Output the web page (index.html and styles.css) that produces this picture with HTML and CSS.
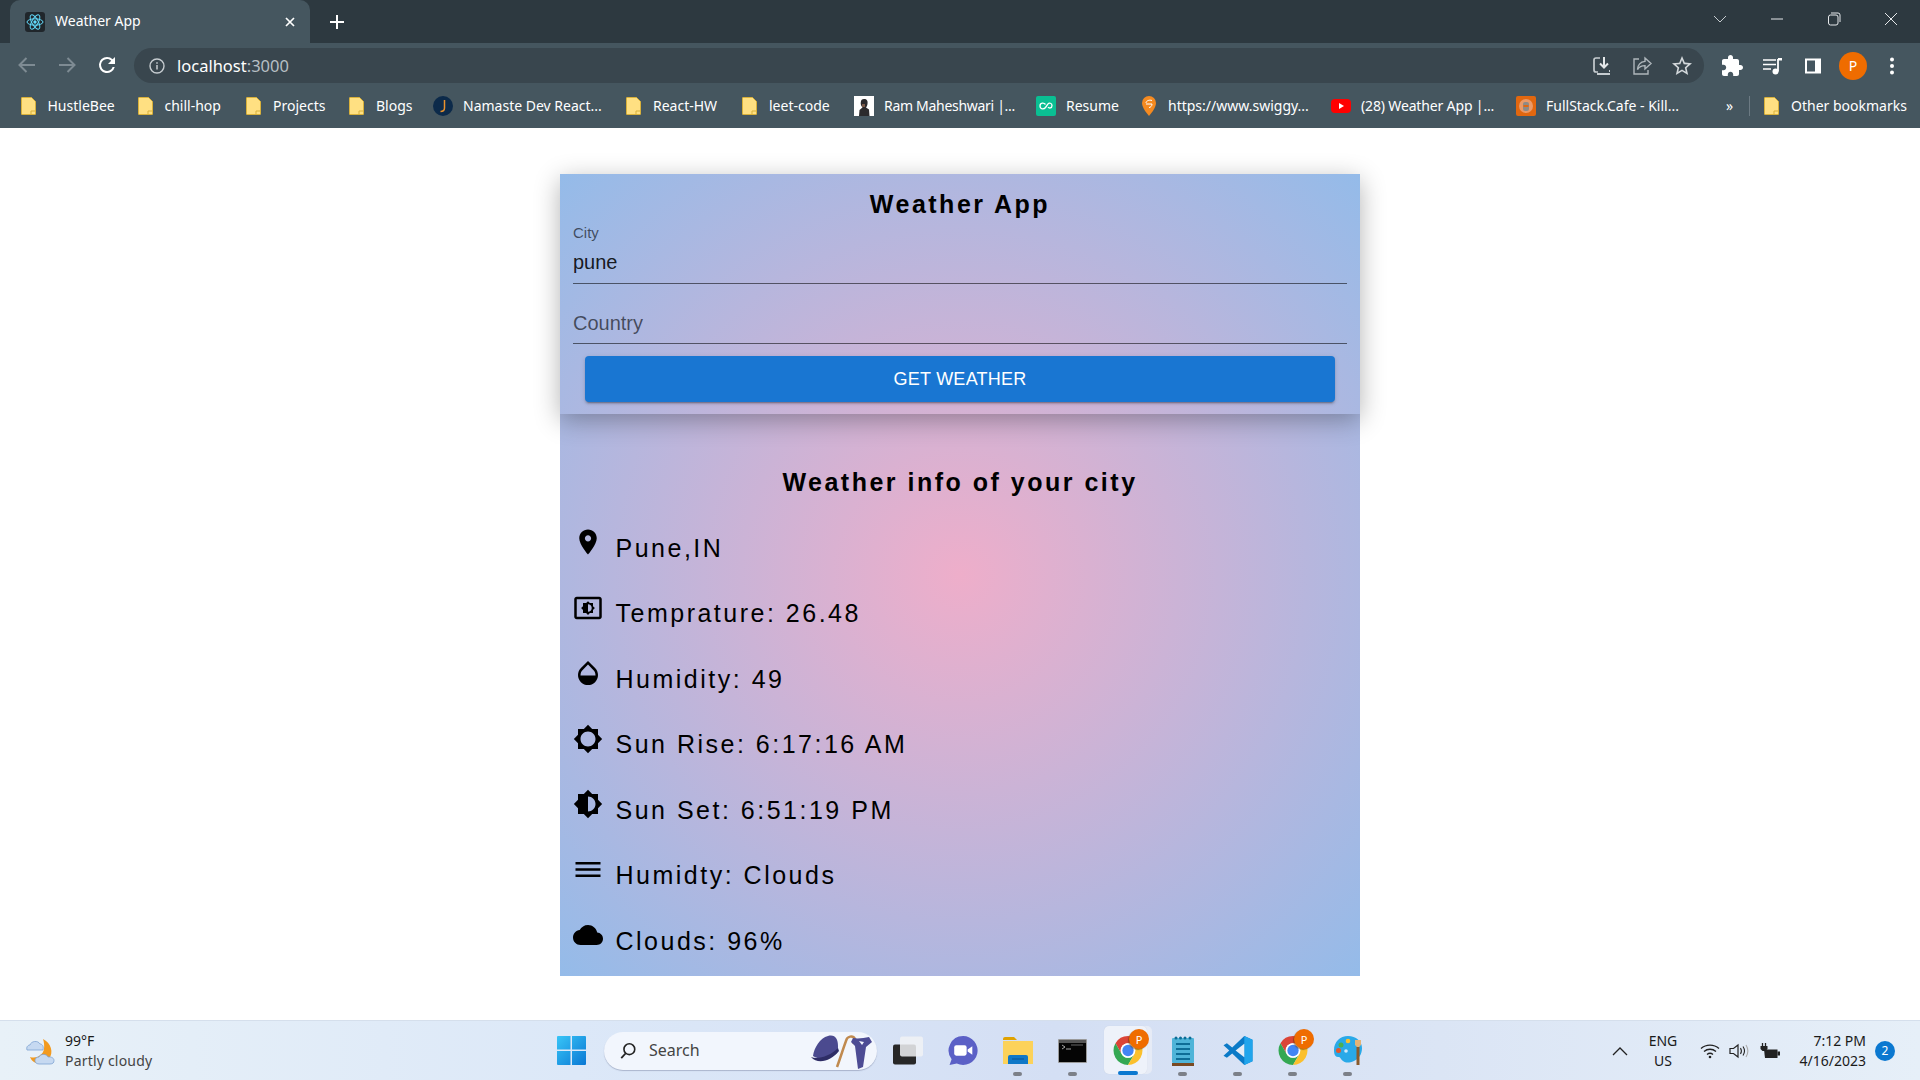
FILE: index.html
```html
<!DOCTYPE html>
<html lang="en">
<head>
<meta charset="utf-8">
<title>Weather App</title>
<link rel="stylesheet" href="styles.css">
</head>
<body>
<svg class="defs" width="0" height="0" aria-hidden="true">
  <symbol id="folder" viewBox="0 0 15 18"><path d="M1 .5h9.5l4 4v12.5a.5.5 0 0 1-.5.5H1a.5.5 0 0 1-.5-.5V1A.5.5 0 0 1 1 .5z" fill="#ffe082" stroke="#d9b13b"/><path d="M10 18v-4h5" fill="none" stroke="#d9b13b"/></symbol>
  <symbol id="chrome" viewBox="0 0 24 24"><path d="M12 0a12 12 0 0 1 10.39 6H12a6 6 0 0 0-5.2 9L1.61 6A12 12 0 0 1 12 0z" fill="#db4437"/><path d="M1.61 6A12 12 0 0 0 12 24l5.2-9a6 6 0 0 1-10.4 0z" fill="#34a853"/><path d="M22.39 6H12a6 6 0 0 1 5.2 9L12 24A12 12 0 0 0 22.39 6z" fill="#fbc02d"/><circle cx="12" cy="12" r="6" fill="#fff"/><circle cx="12" cy="12" r="4.7" fill="#4285f4"/></symbol>
</svg>

<header class="browser">
  <div class="tabstrip">
    <div class="tab">
      <svg class="favicon" viewBox="0 0 20 20"><rect width="20" height="20" rx="3" fill="#20262b"/><g fill="none" stroke="#61dafb" stroke-width="1"><ellipse cx="10" cy="10" rx="8" ry="3.2"/><ellipse cx="10" cy="10" rx="8" ry="3.2" transform="rotate(60 10 10)"/><ellipse cx="10" cy="10" rx="8" ry="3.2" transform="rotate(120 10 10)"/></g><circle cx="10" cy="10" r="1.7" fill="#61dafb"/></svg>
      <span class="tab-title">Weather App</span>
      <svg class="tab-close" viewBox="0 0 10 10"><path d="M1 1l8 8M9 1l-8 8" stroke="#fff" stroke-width="1.7"/></svg>
    </div>
    <svg class="new-tab" viewBox="0 0 16 16"><path d="M8 1v14M1 8h14" stroke="#fff" stroke-width="2"/></svg>
    <div class="winctl">
      <svg class="wc wc-chev" viewBox="0 0 14 14"><path d="M1 4l6 6 6-6" fill="none" stroke="#c5cbcf" stroke-width="1"/></svg>
      <svg class="wc wc-min" viewBox="0 0 14 14"><path d="M1 7h12" stroke="#e6e9eb" stroke-width="1"/></svg>
      <svg class="wc wc-max" viewBox="0 0 14 14"><rect x="1.5" y="3" width="9.5" height="10" rx="2" fill="none" stroke="#e6e9eb"/><path d="M4 1h7a2 2 0 0 1 2 2v7" fill="none" stroke="#e6e9eb"/></svg>
      <svg class="wc wc-close" viewBox="0 0 14 14"><path d="M1 1l12 12M13 1L1 13" stroke="#e6e9eb" stroke-width="1"/></svg>
    </div>
  </div>
  <div class="toolbar">
    <svg class="tb" viewBox="0 0 24 24"><path d="M20 12H5M11.5 5L4.5 12l7 7" fill="none" stroke="#7e8b93" stroke-width="2"/></svg>
    <svg class="tb" viewBox="0 0 24 24"><path d="M4 12h15M12.5 5l7 7-7 7" fill="none" stroke="#7e8b93" stroke-width="2"/></svg>
    <svg class="tb" viewBox="0 0 24 24"><path d="M17.65 6.35A7.96 7.96 0 0 0 12 4a8 8 0 1 0 7.73 10h-2.08A6 6 0 1 1 12 6c1.66 0 3.14.69 4.22 1.78L13 11h7V4l-2.35 2.35z" fill="#fff"/></svg>
    <div class="omnibox">
      <svg class="info" viewBox="0 0 16 16"><circle cx="8" cy="8" r="7" fill="none" stroke="#c6ccd0" stroke-width="1.4"/><path d="M8 7v4.5M8 4.2v1.5" stroke="#c6ccd0" stroke-width="1.5"/></svg>
      <span class="url">localhost<span class="url-port">:3000</span></span>
      <span class="omni-right">
        <svg class="tb" viewBox="0 0 24 24"><path d="M10 4H6a2 2 0 0 0-2 2v10a2 2 0 0 0 2 2h2" fill="none" stroke="#c6ccd0" stroke-width="1.7"/><path d="M14 3v10M10 9.5l4 4 4-4" fill="none" stroke="#e4e7e9" stroke-width="2"/><path d="M7 19h13v2H7z" fill="#c6ccd0"/><path d="M19 16h1v2h-1z" fill="#c6ccd0"/></svg>
        <svg class="tb" viewBox="0 0 24 24"><path d="M9 5H4v15h14v-4" fill="none" stroke="#aeb6bb" stroke-width="1.4"/><path d="M15 4l6 5.5-6 5.5v-3.4c-3.5 0-6 1.2-7.5 4 .3-4.5 3-7.700 7.500-8.200z" fill="none" stroke="#aeb6bb" stroke-width="1.4"/></svg>
        <svg class="tb" viewBox="0 0 24 24"><path d="M22 9.24l-7.19-.62L12 2 9.19 8.63 2 9.24l5.46 4.73L5.82 21 12 17.27 18.18 21l-1.63-7.03L22 9.24zM12 15.4l-3.76 2.27 1-4.28-3.32-2.88 4.38-.38L12 6.1l1.71 4.04 4.38.38-3.32 2.88 1 4.28L12 15.4z" fill="#d3d8db"/></svg>
      </span>
    </div>
    <span class="tb-right">
      <svg class="tb" viewBox="0 0 24 24"><path d="M20.5 11H19V7c0-1.1-.9-2-2-2h-4V3.500C13 2.120 11.880 1 10.500 1S8 2.120 8 3.500V5H4c-1.100 0-1.990.9-1.990 2v3.800H3.500c1.490 0 2.700 1.210 2.700 2.700s-1.210 2.700-2.700 2.700H2V20c0 1.100.9 2 2 2h3.800v-1.500c0-1.490 1.210-2.700 2.700-2.700 1.490 0 2.700 1.210 2.700 2.700V22H17c1.100 0 2-.9 2-2v-4h1.500c1.380 0 2.500-1.120 2.500-2.500S21.880 11 20.500 11z" fill="#fff"/></svg>
      <svg class="tb" viewBox="0 0 24 24"><path d="M3 6h13M3 10.500h13M3 15h8" stroke="#fff" stroke-width="1.700"/><path d="M18 5v12.500" stroke="#fff" stroke-width="1.800"/><path d="M18 4h4v2.500h-4z" fill="#fff"/><circle cx="15.500" cy="17.500" r="3" fill="#fff"/></svg>
      <svg class="tb tb-panel" viewBox="0 0 24 24"><rect x="4" y="4.500" width="16" height="15" fill="#fff"/><rect x="6" y="6.500" width="8" height="11" fill="#44555f"/></svg>
      <span class="avatar">P</span>
      <svg class="tb tb-dots" viewBox="0 0 24 24"><circle cx="12" cy="5.500" r="2" fill="#fff"/><circle cx="12" cy="12" r="2" fill="#fff"/><circle cx="12" cy="18.500" r="2" fill="#fff"/></svg>
    </span>
  </div>
  <nav class="bookmarks">
    <a class="bm"><svg class="ic-folder"><use href="#folder"/></svg><span class="bm-t w-hustle">HustleBee</span></a>
    <a class="bm"><svg class="ic-folder"><use href="#folder"/></svg><span class="bm-t w-chill">chill-hop</span></a>
    <a class="bm"><svg class="ic-folder"><use href="#folder"/></svg><span class="bm-t w-projects">Projects</span></a>
    <a class="bm"><svg class="ic-folder"><use href="#folder"/></svg><span class="bm-t w-blogs">Blogs</span></a>
    <a class="bm"><svg class="ic-fav" viewBox="0 0 20 20"><circle cx="10" cy="10" r="10" fill="#0c2a4a"/><path d="M11.500 4v8c0 2.500-1.500 3.500-4 3.500" fill="none" stroke="#e8912d" stroke-width="1.500"/></svg><span class="bm-t w-namaste">Namaste Dev React...</span></a>
    <a class="bm"><svg class="ic-folder"><use href="#folder"/></svg><span class="bm-t w-react">React-HW</span></a>
    <a class="bm"><svg class="ic-folder"><use href="#folder"/></svg><span class="bm-t w-leet">leet-code</span></a>
    <a class="bm"><svg class="ic-fav" viewBox="0 0 20 20"><rect width="20" height="20" fill="#fff"/><path d="M10 3c3 0 4 2 3.500 5-.3 2-1 3-1.500 3.500l3 2 .5 6.500H5l.5-6 3-2.500C7 10 6.500 8 6.800 6 7 4 8 3 10 3z" fill="#2b2a2c"/><path d="M8 8h3v3H8z" fill="#7b5a49"/></svg><span class="bm-t w-ram">Ram Maheshwari |...</span></a>
    <a class="bm"><svg class="ic-fav" viewBox="0 0 20 20"><rect width="20" height="20" rx="2" fill="#0abf93"/><path d="M9.500 8.500C8 6.500 4 6.500 4 10s4 3.500 5.500 1.500L12 8c1-1.500 4-1 4 1.500 0 3-3 3-4 1.500" fill="none" stroke="#fff" stroke-width="1.300"/></svg><span class="bm-t w-resume">Resume</span></a>
    <a class="bm"><svg class="ic-sw" viewBox="0 0 14 20"><path d="M7 0a7 7 0 0 1 7 7c0 4-4 9.500-7 13-3-3.500-7-9-7-13a7 7 0 0 1 7-7z" fill="#f58a20"/><path d="M4 7c0-2 3-3.500 6-2.500M4 8h6c0 2-1.500 3.500-3 3.500" fill="none" stroke="#fff" stroke-width="1"/></svg><span class="bm-t w-swiggy">https://www.swiggy...</span></a>
    <a class="bm"><svg class="ic-fav" viewBox="0 0 20 20"><rect y="3" width="20" height="14" rx="4" fill="#f00"/><path d="M8 7l5 3-5 3z" fill="#fff"/></svg><span class="bm-t w-yt">(28) Weather App |...</span></a>
    <a class="bm"><svg class="ic-fav" viewBox="0 0 20 20"><rect width="20" height="20" rx="2" fill="#e2670f"/><circle cx="10" cy="10" r="7" fill="#ea9a68"/><rect x="7" y="6" width="6" height="9" rx="2" fill="#8e8a86"/><rect x="7.500" y="9" width="5" height="2" fill="#e2670f"/></svg><span class="bm-t w-full">FullStack.Cafe - Kill...</span></a>
    <span class="bm-more">»</span>
    <span class="bm-sep"></span>
    <a class="bm"><svg class="ic-folder"><use href="#folder"/></svg><span class="bm-t">Other bookmarks</span></a>
  </nav>
</header>

<main class="page">
  <section class="card">
    <form class="form">
      <h1 class="title">Weather App</h1>
      <div class="field field-city">
        <label class="label-small">City</label>
        <div class="value">pune</div>
      </div>
      <div class="field field-country">
        <div class="value placeholder">Country</div>
      </div>
      <button class="btn" type="button">GET WEATHER</button>
    </form>
    <div class="info-panel">
      <h2 class="title info-title">Weather info of your city</h2>
      <div class="row"><svg class="icon" viewBox="0 0 24 24"><path d="M12 2C8.130 2 5 5.130 5 9c0 5.250 7 13 7 13s7-7.750 7-13c0-3.870-3.130-7-7-7zm0 9.500c-1.380 0-2.500-1.120-2.500-2.500s1.120-2.500 2.500-2.500 2.500 1.120 2.500 2.500-1.120 2.500-2.500 2.500z"/></svg><span class="row-t">Pune,IN</span></div>
      <div class="row"><svg class="icon" viewBox="0 0 24 24"><path d="M21 3H3c-1.110 0-2 .89-2 2v14c0 1.110.89 2 2 2h18c1.110 0 2-.89 2-2V5c0-1.110-.89-2-2-2zm0 16.010H3V4.990h18v14.020zM8 16h2.500l1.500 1.500 1.500-1.500H16v-2.500l1.500-1.500-1.500-1.500V8h-2.500L12 6.500 10.500 8H8v2.500L6.500 12 8 13.500V16zm4-7c1.660 0 3 1.340 3 3s-1.340 3-3 3V9z"/></svg><span class="row-t">Temprature: 26.48</span></div>
      <div class="row"><svg class="icon" viewBox="0 0 24 24"><path d="M17.660 8L12 2.350 6.340 8C4.780 9.560 4 11.640 4 13.640s.78 4.110 2.340 5.670 3.610 2.350 5.660 2.350 4.100-.79 5.660-2.350S20 15.640 20 13.640 19.220 9.560 17.660 8zM6 14c.01-2 .62-3.270 1.760-4.400L12 5.270l4.240 4.380C17.380 10.770 17.990 12 18 14H6z"/></svg><span class="row-t">Humidity: 49</span></div>
      <div class="row"><svg class="icon" viewBox="0 0 24 24"><path d="M20 15.310L23.310 12 20 8.690V4h-4.690L12 .69 8.690 4H4v4.690L.69 12 4 15.310V20h4.690L12 23.310 15.310 20H20v-4.690zM12 18c-3.310 0-6-2.690-6-6s2.690-6 6-6 6 2.690 6 6-2.690 6-6 6z"/></svg><span class="row-t">Sun Rise: 6:17:16 AM</span></div>
      <div class="row"><svg class="icon" viewBox="0 0 24 24"><path d="M20 15.310L23.310 12 20 8.690V4h-4.690L12 .69 8.690 4H4v4.690L.69 12 4 15.310V20h4.690L12 23.310 15.310 20H20v-4.690zM12 18V6c3.310 0 6 2.690 6 6s-2.690 6-6 6z"/></svg><span class="row-t">Sun Set: 6:51:19 PM</span></div>
      <div class="row"><svg class="icon" viewBox="0 0 24 24"><path d="M2 15.500v2h20v-2H2zm0-5v2h20v-2H2zm0-5v2h20v-2H2z"/></svg><span class="row-t">Humidty: Clouds</span></div>
      <div class="row"><svg class="icon" viewBox="0 0 24 24"><path d="M19.350 10.040C18.670 6.590 15.640 4 12 4 9.110 4 6.600 5.640 5.350 8.040 2.340 8.360 0 10.910 0 14c0 3.310 2.690 6 6 6h13c2.760 0 5-2.240 5-5 0-2.640-2.050-4.780-4.650-4.960z"/></svg><span class="row-t">Clouds: 96%</span></div>
    </div>
  </section>
</main>

<footer class="taskbar">
  <div class="tk-weather">
    <svg class="tk-wicon" viewBox="0 0 30 28"><path d="M17 2c8 4 11 13 6 20-3 4-10 6-15 3-2-1-3-3-4-5 7 2 13-2 14-8 .5-4 0-7-1-10z" fill="#f29a1f"/><path d="M1 13c-1-3 1-5 3-5 1-4 8-5 10-1 2 0 4 2 3 6z" fill="#c6d9f1" stroke="#7fa3d3" stroke-width=".8"/><path d="M13 27c-3 0-4-2-4-3.500s1-3.500 4-3.500c1-3.500 8-3.500 9 0 4-.5 6 1.500 6 3.500s-1 3.500-4 3.500z" fill="#c6d9f1" stroke="#7fa3d3" stroke-width=".8"/></svg>
    <div class="tk-wtext"><span class="tk-temp">99°F</span><span class="tk-cond">Partly cloudy</span></div>
  </div>
  <svg class="win-logo" viewBox="0 0 29 29"><defs><linearGradient id="wl" x1="0" y1="0" x2="1" y2="1"><stop offset="0" stop-color="#38c5f7"/><stop offset="1" stop-color="#0a78d4"/></linearGradient></defs><path d="M0 1a1 1 0 0 1 1-1h12.500v13.500H0zM15 0h13a1 1 0 0 1 1 1v12.500H15zM0 15h13.500v14H1a1 1 0 0 1-1-1zM15 15h14v13a1 1 0 0 1-1 1H15z" fill="url(#wl)"/></svg>
  <div class="search">
    <svg class="search-ic" viewBox="0 0 20 20"><circle cx="11.500" cy="8" r="6" fill="none" stroke="#222" stroke-width="1.800"/><path d="M7.500 12.500L2.500 18" stroke="#222" stroke-width="2"/></svg>
    <span class="search-t">Search</span>
    <svg class="search-art" viewBox="0 0 62 38"><path d="M2 24C3 16 9 6 17 4c7-2 10 3 10 10 0 3 0 5-1 7-6 5-16 8-24 3z" fill="#4b4a8f"/><path d="M0 25c7 3 19-1 27-9l1 3C20 29 7 33 0 25z" fill="#2e2d66"/><path d="M26 35c3-8 6-18 9-26 1-5 7-6 9-2l-1.500 5" fill="none" stroke="#c08a4f" stroke-width="2.500"/><path d="M42 6c5 1 11 0 16-1l3 5-6 5-3 20-5 2-3-23-4-4z" fill="#4d4c94"/><path d="M48 9l5 1-2 3z" fill="#f2f6fd"/></svg>
  </div>
  <div class="tk-apps">
    <div class="app"><svg class="app-ic" viewBox="0 0 30 28"><rect y="8" width="23" height="20" rx="2" fill="#272727"/><rect x="7" width="23" height="20" rx="2" fill="#f1f2f4" opacity=".85"/></svg></div>
    <div class="app"><svg class="app-ic" viewBox="0 0 29 28"><path d="M14.500 0a14 14 0 1 1-6 26.600L1.500 28l2-5.500A14 14 0 0 1 14.500 0z" fill="#5b60c6"/><rect x="6" y="9" width="12" height="10" rx="2" fill="#fff"/><path d="M19 13l4.500-3v8L19 15z" fill="#fff"/></svg></div>
    <div class="app"><svg class="app-ic" viewBox="0 0 30 27"><path d="M0 2a2 2 0 0 1 2-2h9l3 3h-14z" fill="#e0a200"/><path d="M0 4h30v23H0z" fill="#fcd25a"/><path d="M5 20a2 2 0 0 1 2-2h16a2 2 0 0 1 2 2v7H5z" fill="#0f78c8"/><path d="M9 22h12" stroke="#0a5a9c" stroke-width="1.200"/></svg><i class="dot"></i></div>
    <div class="app"><svg class="app-term" viewBox="0 0 29 24"><rect width="29" height="24" rx="1" fill="#9a9a9a"/><rect x="1" y="1" width="27" height="22" fill="#050505"/><rect x="1" y="1" width="27" height="3" fill="#555"/><path d="M4 6l3 2-3 2M8 10h5" stroke="#ccc" stroke-width=".8" fill="none"/><path d="M13 6h12" stroke="#666"/></svg><i class="dot"></i></div>
    <div class="app app-active"><span class="stack"></span><svg class="app-ic"><use href="#chrome"/></svg><span class="pbadge">P</span><i class="dot dot-active"></i></div>
    <div class="app"><svg class="app-note" viewBox="0 0 22 30"><rect y="2" width="22" height="25" rx="1" fill="#4fb4d8"/><path d="M0 27h22v3H0z" fill="#7a4a22"/><path d="M4 8h14M4 13h14M4 18h14M4 23h14" stroke="#0e6d96" stroke-width="2"/><g fill="#0e6d96"><circle cx="4" cy="2" r="1.500"/><circle cx="8.500" cy="2" r="1.500"/><circle cx="13" cy="2" r="1.500"/><circle cx="18" cy="2" r="1.500"/></g></svg><i class="dot"></i></div>
    <div class="app"><svg class="app-ic" viewBox="0 0 30 30"><path d="M21.500 0L30 4v22l-8.500 4L9 18l-5.500 4.500L0 20.500 6 15 0 9.500 3.500 7.500 9 12z" fill="#0b7ac7"/><path d="M21.500 0L30 4v22l-8.500 4z" fill="#21a5ec"/><path d="M21.500 8L12.500 15l9 7z" fill="#e4edf7"/></svg><i class="dot"></i></div>
    <div class="app"><svg class="app-ic"><use href="#chrome"/></svg><span class="pbadge">P</span><i class="dot"></i></div>
    <div class="app"><svg class="app-ic" viewBox="0 0 28 29"><path d="M14 0c8 0 14 5 14 12 0 6-3 11-8 13-5 2-8 2-11 0-3-2-2-4-5-4-3 0-4-3-4-7C0 6 6 0 14 0z" fill="#29a9e8"/><circle cx="7" cy="9" r="2.500" fill="#4caf50"/><circle cx="14" cy="5" r="2.300" fill="#fbc02d"/><circle cx="4.500" cy="14.500" r="2.500" fill="#e2562c"/><circle cx="12" cy="15" r="1.800" fill="#cfe9fa"/><path d="M21 4h6v5l-2 2h-2l-2-2z" fill="#e3b376"/><path d="M22.500 11h3v18h-3z" fill="#8a5a2b"/></svg><i class="dot"></i></div>
  </div>
  <div class="tray">
    <svg class="tray-chev" viewBox="0 0 16 10"><path d="M1 9l7-7 7 7" fill="none" stroke="#222" stroke-width="1.300"/></svg>
    <div class="lang"><span>ENG</span><span>US</span></div>
    <svg class="tray-wifi" viewBox="0 0 20 16"><path d="M1 5.500C6 1 14 1 19 5.500M4 8.500c3.500-3 8.500-3 12 0M7 11.500c1.800-1.500 4.200-1.500 6 0" fill="none" stroke="#222" stroke-width="1.300"/><circle cx="10" cy="14" r="1.300" fill="#222"/></svg>
    <svg class="tray-vol" viewBox="0 0 20 16"><path d="M1 5.500h3.500L9 2v12l-4.500-3.500H1z" fill="none" stroke="#222" stroke-width="1.200"/><path d="M11.500 5c1.200 2 1.200 4 0 6M14 3.500c2 3 2 6 0 9" fill="none" stroke="#222" stroke-width="1.100"/><path d="M17 2c2.500 4 2.500 8 0 12" fill="none" stroke="#aaa" stroke-width="1.100"/></svg>
    <svg class="tray-bat" viewBox="0 0 20 16"><path d="M2.500 0v3.500M5.500 0v3.500" stroke="#222" stroke-width="1.300"/><path d="M.5 3h7v3L5.500 8h-3L.5 6z" fill="#222"/><path d="M4 6.500h13.500v8.500H5z" fill="#222"/><path d="M17.500 8.500H20v4h-2.500z" fill="#222"/></svg>
    <div class="clock"><span>7:12 PM</span><span>4/16/2023</span></div>
    <span class="notif">2</span>
  </div>
</footer>
</body>
</html>
```
FILE: styles.css
```css
* { box-sizing: border-box; }
html, body { margin: 0; height: 100%; }
body { display: flex; flex-direction: column; height: 100vh; overflow: hidden; background: #fff; font-family: "Liberation Sans", Arial, sans-serif; }
.defs { position: absolute; }
svg { display: block; flex: none; }

/* browser frame */
.browser { flex: none; font-family: "Noto Sans", sans-serif; color: #fff; }
.tabstrip { height: 43px; background: #2d3940; display: flex; align-items: center; padding-left: 10px; }
.tab { width: 300px; height: 43px; background: #45565f; border-radius: 10px 10px 0 0; display: flex; align-items: center; padding: 0 15px; }
.favicon { width: 20px; height: 20px; }
.tab-title { margin-left: 10px; font-size: 14px; flex: 1; line-height: 19px; margin-top: -3px; }
.tab-close { width: 10px; height: 10px; }
.new-tab { width: 16px; height: 16px; margin-left: 19px; }
.winctl { margin-left: auto; display: flex; align-items: center; padding-right: 22px; margin-top: -5px; }
.wc { width: 14px; height: 14px; margin-left: 43px; }
.wc-chev { margin-left: 0; }
.toolbar { height: 40px; background: #45565f; display: flex; align-items: flex-start; padding: 5px 0 0 15px; }
.toolbar > .tb { margin-top: 5px; margin-right: 16px; }
.toolbar > .tb:nth-child(3) { margin-right: 15px; }
.tb { width: 24px; height: 24px; }
.omnibox { width: 1570px; height: 35px; background: #39464e; border-radius: 18px; display: flex; align-items: center; padding-left: 15px; }
.info { width: 16px; height: 16px; }
.url { margin-left: 12px; font-size: 16.500px; }
.url-port { color: #b7bfc4; }
.omni-right { margin-left: auto; display: flex; gap: 16px; padding-right: 10px; }
.tb-right { display: flex; align-items: center; gap: 16px; margin-left: 16px; height: 35px; }
.tb-panel { margin-left: 1px; }
.tb-dots { margin-left: -1px; }
.avatar { width: 28px; height: 28px; margin: 0 -2px; border-radius: 50%; background: #ef6c00; display: flex; align-items: center; justify-content: center; font-size: 14px; }

.bookmarks { height: 45px; background: #45565f; display: flex; align-items: center; padding-left: 20.500px; gap: 22.500px; font-size: 14px; }
.bm { display: flex; align-items: center; gap: 12px; white-space: nowrap; }
.bm-t { display: block; }
.w-hustle { width: 67.500px; }
.w-chill { width: 59px; }
.w-projects { width: 53.500px; }
.w-blogs { width: 34.500px; }
.w-namaste { width: 140.500px; }
.w-react { width: 66.500px; }
.w-leet { width: 62.500px; }
.w-ram { width: 129.500px; letter-spacing: -.3px; }
.w-resume { width: 53.500px; }
.w-swiggy { width: 140.500px; }
.w-yt { width: 132.500px; letter-spacing: -.15px; }
.w-full { width: 135px; }
.ic-folder { width: 15px; height: 18px; }
.ic-fav { width: 20px; height: 20px; margin-right: -2px; }
.ic-sw { width: 14px; height: 20px; }
.bm-more { margin-left: 22.500px; font-size: 14px; width: 8px; }
.bm-sep { width: 1px; height: 20px; background: #6c7a83; margin: 0 -8.500px 0 -7.500px; }

/* page */
.page { flex: 1; min-height: 0; display: flex; justify-content: center; padding-top: 46px; }
.card { width: 800px; height: 802px; background: radial-gradient(circle, #eeaeca 0%, #94bbe9 100%); color: #000; }
.form { height: 240px; padding: 16px 13px 0; box-shadow: 0 6px 24px rgba(0,0,0,.3); display: flex; flex-direction: column; }
.title { margin: 0; font-size: 25px; font-weight: 700; letter-spacing: 2.5px; text-align: center; line-height: 29px; }
.field { border-bottom: 1px solid rgba(0,0,0,.55); }
.field-city { height: 61px; margin-top: 4px; }
.field-country { height: 60px; padding-top: 28px; }
.label-small { display: block; font-size: 15px; line-height: 19px; color: rgba(0,0,0,.6); }
.value { font-size: 20px; line-height: 23px; margin-top: 9px; color: rgba(0,0,0,.87); }
.placeholder { margin-top: 0; color: rgba(0,0,0,.6); }
.btn { height: 46px; margin: 12px 12px 0; border: 0; border-radius: 4px; background: #1976d2; color: #fff; font: 18px "Liberation Sans", Arial, sans-serif; letter-spacing: .25px; box-shadow: 0 3px 1px -2px rgba(0,0,0,.2), 0 2px 2px rgba(0,0,0,.14), 0 1px 5px rgba(0,0,0,.12); }
.info-panel { padding: 0 13px; }
.info-title { margin-top: 54px; margin-bottom: 30px; }
.row { height: 65.5px; display: flex; align-items: flex-start; gap: 12.500px; }
.icon { width: 30px; height: 30px; }
.row-t { font-size: 25px; line-height: 29px; letter-spacing: 2.5px; margin-top: 6.750px; white-space: nowrap; }

/* taskbar */
.taskbar { flex: none; height: 60px; position: relative; display: flex; align-items: center; padding-left: 26px; background: linear-gradient(90deg, #e8f1f8 0%, #dce8f8 30%, #d4dff4 55%, #dbe5f5 75%, #e6eff8 100%); border-top: 1px solid #d5dfec; font-family: "Noto Sans", sans-serif; color: #1a1a1a; font-size: 14px; }
.tk-weather { display: flex; align-items: center; gap: 9px; width: 531px; }
.tk-wicon { width: 30px; height: 28px; }
.tk-wtext { display: flex; flex-direction: column; line-height: 20px; }
.tk-cond { color: #444; letter-spacing: .2px; }
.win-logo { width: 29px; height: 29px; }
.search { width: 273px; height: 38px; margin-left: 18px; border-radius: 19px; background: #f2f6fd; box-shadow: 0 1px 1px rgba(60,70,110,.3); display: flex; align-items: center; padding-left: 15px; }
.search-ic { width: 18px; height: 18px; }
.search-t { margin-left: 12px; font-size: 16px; line-height: 20px; margin-top: -2px; color: #444; }
.search-art { width: 62px; height: 38px; margin-left: auto; margin-right: 4px; }
.tk-apps { display: flex; margin-left: 3px; height: 59px; }
.app { width: 55px; height: 59px; display: flex; align-items: center; justify-content: center; position: relative; }
.app-ic { width: 30px; height: 29px; }
.app-term { width: 29px; height: 24px; }
.app-note { width: 22px; height: 30px; }
.dot { position: absolute; left: 50%; bottom: 4px; width: 9px; height: 4px; margin-left: -4.500px; border-radius: 2px; background: #7c8088; }
.dot-active { width: 20px; margin-left: -10px; height: 4px; background: #0b78d0; bottom: 5px; }
.app-active::before { content: ""; position: absolute; left: 4px; top: 5px; width: 43px; height: 48px; border-radius: 5px; background: #eef2fa; z-index: 1; box-shadow: 0 0 1px rgba(0,0,0,.1); }
.stack { position: absolute; left: 8px; top: 5px; width: 44px; height: 48px; border-radius: 5px; background: #e6ebf6; }
.app-active .app-ic, .app-active .dot { z-index: 2; }
.pbadge { position: absolute; left: 29px; top: 8px; width: 20px; height: 20px; border-radius: 50%; background: #ef6c00; color: #fff; font-size: 11px; display: flex; align-items: center; justify-content: center; z-index: 3; box-shadow: -1px 1px 1px rgba(90,50,0,.5); }
.tray { margin-left: auto; display: flex; align-items: center; padding-right: 25px; }
.tray-chev { width: 16px; height: 10px; }
.lang { display: flex; flex-direction: column; align-items: center; line-height: 20px; width: 40px; margin-left: 15px; }
.tray-wifi { width: 20px; height: 16px; margin-left: 17px; }
.tray-vol { width: 20px; height: 16px; margin-left: 9px; }
.tray-bat { width: 20px; height: 16px; margin-left: 11px; }
.clock { display: flex; flex-direction: column; align-items: flex-end; line-height: 19.500px; width: 76px; margin-left: 10px; }
.notif { width: 20px; height: 20px; margin-left: 9px; border-radius: 50%; background: #0b78d0; color: #fff; font-size: 12px; display: flex; align-items: center; justify-content: center; }
```
